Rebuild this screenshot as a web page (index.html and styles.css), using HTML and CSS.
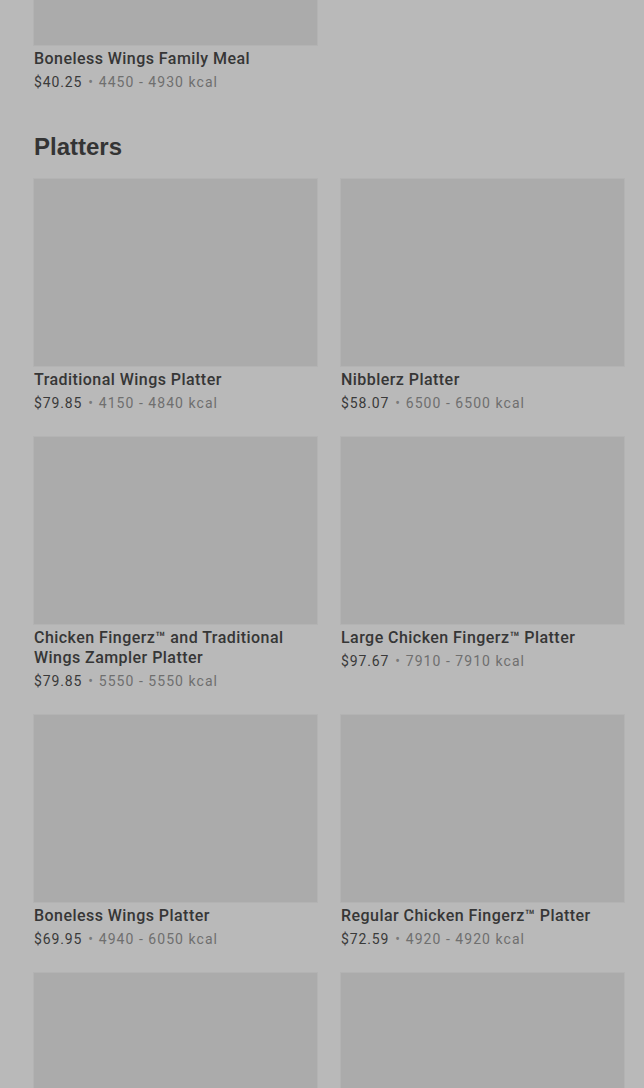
FILE: index.html
```html
<!DOCTYPE html>
<html>
<head>
<meta charset="utf-8">
<link rel="stylesheet" href="styles.css">
</head>
<body>
<main class="page">
  <section class="section section-first">
    <div class="grid">
      <article class="card">
        <div class="thumb"></div>
        <h3 class="card-title">Boneless Wings Family Meal</h3>
        <p class="card-meta"><span class="price">$40.25</span><span class="dot">•</span><span class="kcal">4450 - 4930 kcal</span></p>
      </article>
    </div>
  </section>

  <section class="section">
    <h2 class="section-title">Platters</h2>
    <div class="grid">
      <article class="card">
        <div class="thumb"></div>
        <h3 class="card-title">Traditional Wings Platter</h3>
        <p class="card-meta"><span class="price">$79.85</span><span class="dot">•</span><span class="kcal">4150 - 4840 kcal</span></p>
      </article>
      <article class="card">
        <div class="thumb"></div>
        <h3 class="card-title">Nibblerz Platter</h3>
        <p class="card-meta"><span class="price">$58.07</span><span class="dot">•</span><span class="kcal">6500 - 6500 kcal</span></p>
      </article>
      <article class="card">
        <div class="thumb"></div>
        <h3 class="card-title">Chicken Fingerz™ and Traditional Wings Zampler Platter</h3>
        <p class="card-meta"><span class="price">$79.85</span><span class="dot">•</span><span class="kcal">5550 - 5550 kcal</span></p>
      </article>
      <article class="card">
        <div class="thumb"></div>
        <h3 class="card-title">Large Chicken Fingerz™ Platter</h3>
        <p class="card-meta"><span class="price">$97.67</span><span class="dot">•</span><span class="kcal">7910 - 7910 kcal</span></p>
      </article>
      <article class="card">
        <div class="thumb"></div>
        <h3 class="card-title">Boneless Wings Platter</h3>
        <p class="card-meta"><span class="price">$69.95</span><span class="dot">•</span><span class="kcal">4940 - 6050 kcal</span></p>
      </article>
      <article class="card">
        <div class="thumb"></div>
        <h3 class="card-title">Regular Chicken Fingerz™ Platter</h3>
        <p class="card-meta"><span class="price">$72.59</span><span class="dot">•</span><span class="kcal">4920 - 4920 kcal</span></p>
      </article>
      <article class="card">
        <div class="thumb"></div>
      </article>
      <article class="card">
        <div class="thumb"></div>
      </article>
    </div>
  </section>
</main>
</body>
</html>
```

FILE: styles.css
```css
html, body {
  margin: 0;
  padding: 0;
  background: #b9b9b9;
  height: 1088px;
  overflow: hidden;
}

.page {
  padding: 0 20px 0 34px;
  margin-top: -142px;
  font-family: Roboto, "Liberation Sans", sans-serif;
}

.section-first {
  margin-bottom: 41px;
}

.section-title {
  margin: 0 0 18px;
  font-family: "Liberation Sans", Arial, sans-serif;
  font-size: 24px;
  line-height: 28px;
  font-weight: 700;
  color: #343434;
}

.grid {
  display: grid;
  grid-template-columns: 283px 283px;
  column-gap: 24px;
  row-gap: 24px;
}

.card {
  display: flex;
  flex-direction: column;
}

.thumb {
  height: 187px;
  background: #ababab;
  box-shadow: 0 0 0 1px #b3b3b3;
}

.card-title {
  margin: 4px 0 0;
  font-size: 16px;
  line-height: 20px;
  font-weight: 500;
  color: #363636;
  letter-spacing: 0.45px;
}

.card-meta {
  margin: 3px 0 0;
  font-size: 14px;
  line-height: 20px;
  font-weight: 400;
  color: #6f6f6f;
  letter-spacing: 0.85px;
}

.price {
  color: #3a3a3a;
}

.dot {
  margin: 0 5px 0 6px;
  color: #7a7a7a;
}

.kcal {
  letter-spacing: 1.05px;
}
```
